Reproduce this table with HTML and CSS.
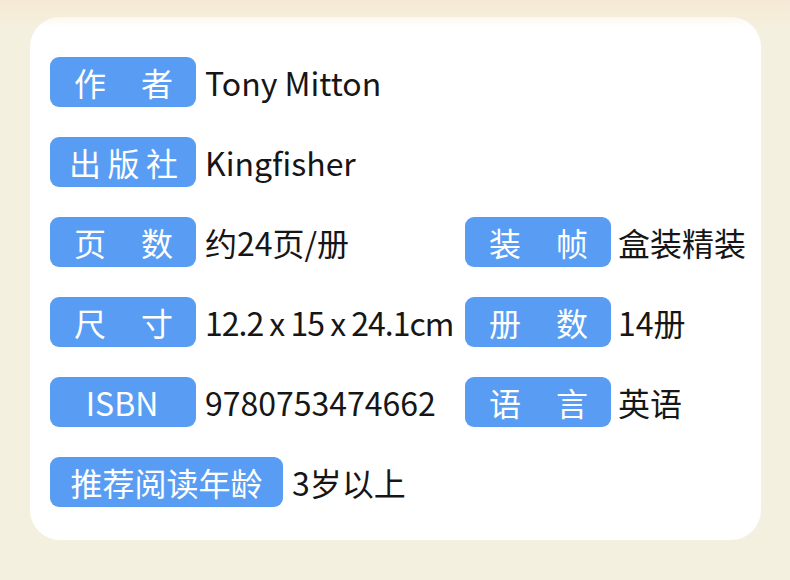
FILE: index.html
```html
<!DOCTYPE html>
<html lang="zh">
<head>
<meta charset="utf-8">
<link rel="stylesheet" href="styles.css">
</head>
<body>
<div class="page">
  <div class="topband"></div>
  <div class="card">
    <div class="grid">
      <div class="item"><div class="label two"><span>作</span><span>者</span></div><div class="value">Tony Mitton</div></div>
      <div class="item empty"></div>
      <div class="item"><div class="label three"><span>出</span><span>版</span><span>社</span></div><div class="value">Kingfisher</div></div>
      <div class="item empty"></div>
      <div class="item"><div class="label two"><span>页</span><span>数</span></div><div class="value">约24页/册</div></div>
      <div class="item"><div class="label two"><span>装</span><span>帧</span></div><div class="value right">盒装精装</div></div>
      <div class="item"><div class="label two"><span>尺</span><span>寸</span></div><div class="value tight">12.2 x 15 x 24.1cm</div></div>
      <div class="item"><div class="label two"><span>册</span><span>数</span></div><div class="value right">14册</div></div>
      <div class="item"><div class="label center"><span>ISBN</span></div><div class="value">9780753474662</div></div>
      <div class="item"><div class="label two"><span>语</span><span>言</span></div><div class="value right">英语</div></div>
      <div class="item"><div class="label wide"><span>推荐阅读年龄</span></div><div class="value">3岁以上</div></div>
    </div>
  </div>
</div>
</body>
</html>
```

FILE: styles.css
```css
html, body {
  margin: 0;
  padding: 0;
}
body {
  width: 790px;
  height: 580px;
  overflow: hidden;
  background: #f4f0df;
  font-family: "Noto Sans CJK SC", "Noto Sans", sans-serif;
}
.page {
  position: relative;
  width: 790px;
  height: 580px;
  padding-top: 17px;
  box-sizing: border-box;
}
.topband {
  position: absolute;
  left: 0;
  top: 0;
  width: 790px;
  height: 30px;
  background: linear-gradient(180deg, #f5e9d5 0%, #f5edda 60%, #f4f0df 100%);
}
.card {
  position: relative;
  margin-left: 30px;
  width: 731px;
  height: 523px;
  box-sizing: border-box;
  background: linear-gradient(180deg, #fbf8ef 0px, #ffffff 10px);
  border-radius: 30px;
  padding: 40px 0 0 20px;
}
.grid {
  display: grid;
  grid-template-columns: 415px 280px;
  grid-auto-rows: 50px;
  row-gap: 30px;
}
.item {
  display: flex;
  align-items: center;
}
.label {
  flex-shrink: 0;
  height: 50px;
  width: 146px;
  box-sizing: border-box;
  background: #589df3;
  border-radius: 9px;
  color: #ffffff;
  font-size: 32px;
  display: flex;
  align-items: center;
  justify-content: space-between;
  line-height: 1;
}
.label.two {
  padding: 0 23px 0 24px;
}
.label.three {
  padding: 0 18px 0 19px;
}
.label.center {
  justify-content: center;
  padding-right: 2px;
}
.label.wide {
  width: 233px;
  justify-content: center;
}
.value {
  margin-left: 9px;
  font-size: 32px;
  color: #161616;
  line-height: 1;
  white-space: nowrap;
}
.value.tight {
  letter-spacing: -1px;
}
.value.right {
  margin-left: 7px;
}
```
